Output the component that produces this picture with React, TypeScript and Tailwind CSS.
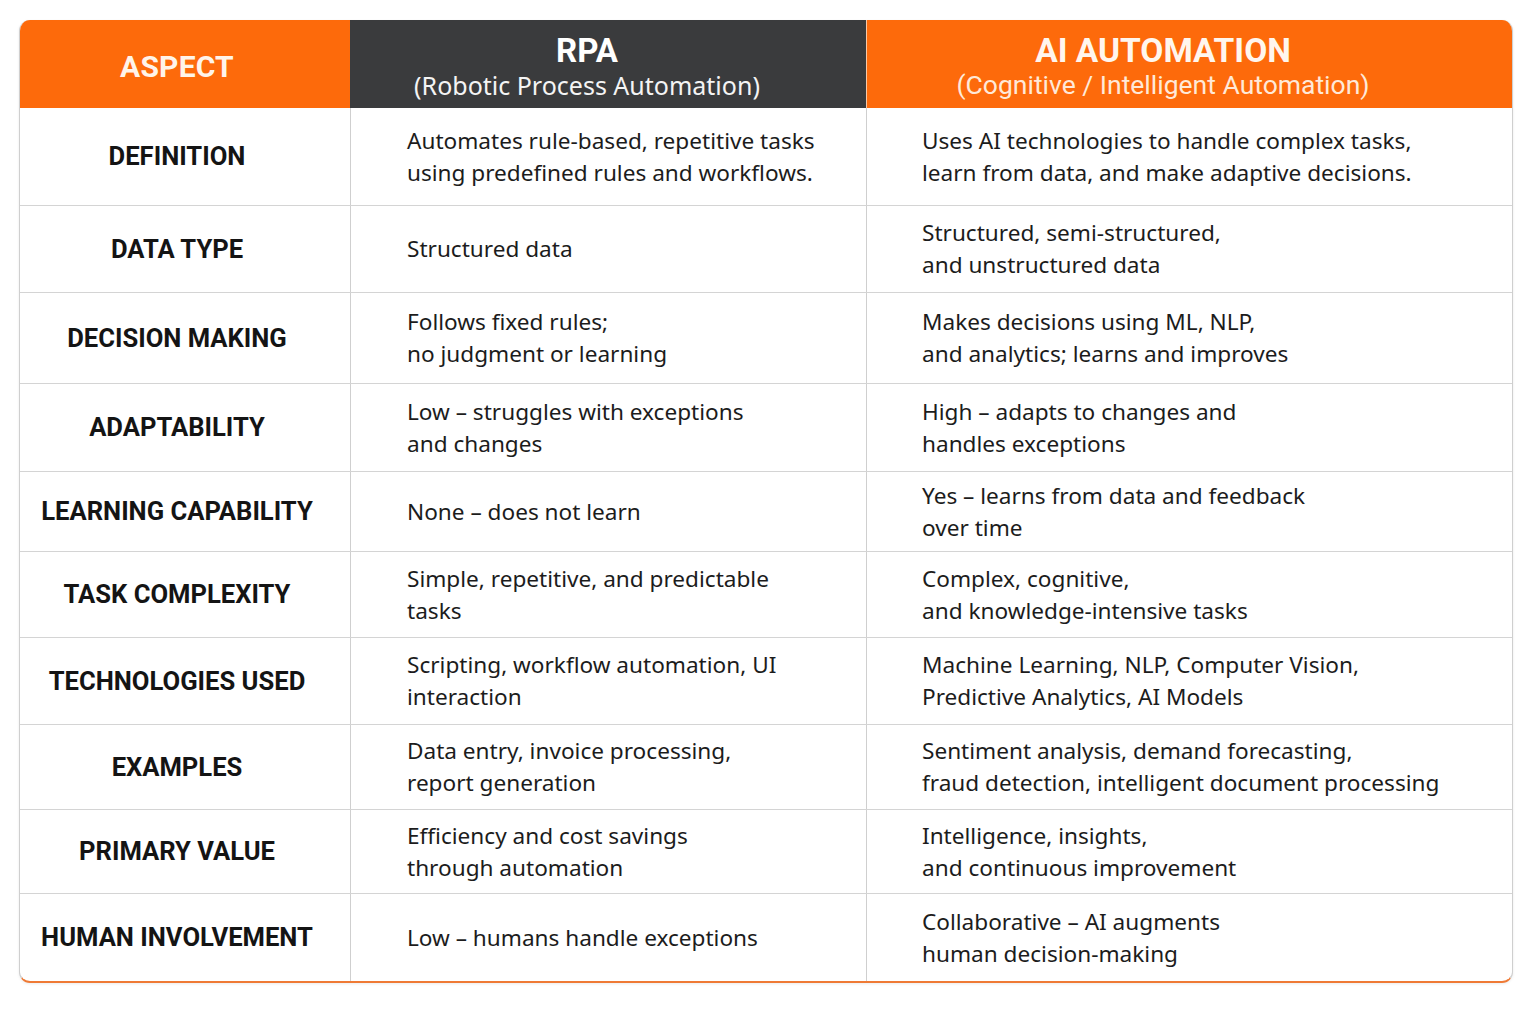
import React from 'react';

interface Row {
  aspect: string;
  rpa: string[];
  ai: string[];
  h: string;
}

const rows: Row[] = [
  {
    aspect: 'DEFINITION',
    rpa: ['Automates rule-based, repetitive tasks', 'using predefined rules and workflows.'],
    ai: ['Uses AI technologies to handle complex tasks,', 'learn from data, and make adaptive decisions.'],
    h: 'h-[97px]',
  },
  {
    aspect: 'DATA TYPE',
    rpa: ['Structured data'],
    ai: ['Structured, semi-structured,', 'and unstructured data'],
    h: 'h-[87px]',
  },
  {
    aspect: 'DECISION MAKING',
    rpa: ['Follows fixed rules;', 'no judgment or learning'],
    ai: ['Makes decisions using ML, NLP,', 'and analytics; learns and improves'],
    h: 'h-[91px]',
  },
  {
    aspect: 'ADAPTABILITY',
    rpa: ['Low – struggles with exceptions', 'and changes'],
    ai: ['High – adapts to changes and', 'handles exceptions'],
    h: 'h-[88px]',
  },
  {
    aspect: 'LEARNING CAPABILITY',
    rpa: ['None – does not learn'],
    ai: ['Yes – learns from data and feedback', 'over time'],
    h: 'h-[80px]',
  },
  {
    aspect: 'TASK COMPLEXITY',
    rpa: ['Simple, repetitive, and predictable', 'tasks'],
    ai: ['Complex, cognitive,', 'and knowledge-intensive tasks'],
    h: 'h-[86px]',
  },
  {
    aspect: 'TECHNOLOGIES USED',
    rpa: ['Scripting, workflow automation, UI', 'interaction'],
    ai: ['Machine Learning, NLP, Computer Vision,', 'Predictive Analytics, AI Models'],
    h: 'h-[87px]',
  },
  {
    aspect: 'EXAMPLES',
    rpa: ['Data entry, invoice processing,', 'report generation'],
    ai: ['Sentiment analysis, demand forecasting,', 'fraud detection, intelligent document processing'],
    h: 'h-[85px]',
  },
  {
    aspect: 'PRIMARY VALUE',
    rpa: ['Efficiency and cost savings', 'through automation'],
    ai: ['Intelligence, insights,', 'and continuous improvement'],
    h: 'h-[84px]',
  },
  {
    aspect: 'HUMAN INVOLVEMENT',
    rpa: ['Low – humans handle exceptions'],
    ai: ['Collaborative – AI augments', 'human decision-making'],
    h: 'h-[88px]',
  },
];

const cols = 'grid grid-cols-[330px_516px_647px]';

export default function App() {
  return (
    <div className="min-h-[1024px] w-[1536px] bg-white pt-[20px] pl-[19px]">
      <div className="w-[1494px] overflow-hidden rounded-[11px] border-x border-b-2 border-x-[#cfcfcf] border-b-[#ef7a35] bg-white shadow-[0_1px_3px_rgba(0,0,0,0.08)]">
        {/* Header */}
        <div className={`${cols} h-[88px] font-['Roboto',sans-serif] text-white`}>
          <div className="flex items-center justify-center bg-[#fd6a0b] pr-4 pt-[4px] text-[30px] font-bold tracking-[0.2px] text-[#fff4ea]">
            ASPECT
          </div>
          <div className="flex flex-col items-center justify-center bg-[#3a3b3d] pt-[7px] pr-[42px]">
            <div className="text-[33px] font-bold leading-[34px]">RPA</div>
            <div className="font-['Noto_Sans',sans-serif] text-[25px] leading-[34px] text-[#f4f4f4]">
              (Robotic Process Automation)
            </div>
          </div>
          <div className="flex flex-col items-center justify-center border-l border-l-[#f7c9a8] bg-[#fd6a0b] pt-[7px] pr-[54px]">
            <div className="text-[33.5px] font-bold leading-[34px] text-[#fff6ee]">AI AUTOMATION</div>
            <div className="text-[26.5px] leading-[34px] text-[#ffe9d8]">
              (Cognitive / Intelligent Automation)
            </div>
          </div>
        </div>

        {/* Body */}
        {rows.map((r, i) => (
          <div
            key={r.aspect}
            className={`${cols} ${r.h} ${i > 0 ? 'border-t border-t-[#d4d4d4]' : ''}`}
          >
            <div className="flex items-center justify-center pr-4 font-['Roboto',sans-serif] text-[25.6px] font-bold text-[#141414]">
              {r.aspect}
            </div>
            <div className="flex flex-col justify-center border-l border-l-[#cfcfcf] pl-[56px] font-['Noto_Sans',sans-serif] text-[22.6px] leading-[32px] text-[#1c1c1c]">
              {r.rpa.map((l) => (
                <div key={l}>{l}</div>
              ))}
            </div>
            <div className="flex flex-col justify-center border-l border-l-[#cfcfcf] pl-[55px] font-['Noto_Sans',sans-serif] text-[22.6px] leading-[32px] text-[#1c1c1c]">
              {r.ai.map((l) => (
                <div key={l}>{l}</div>
              ))}
            </div>
          </div>
        ))}
      </div>
    </div>
  );
}
